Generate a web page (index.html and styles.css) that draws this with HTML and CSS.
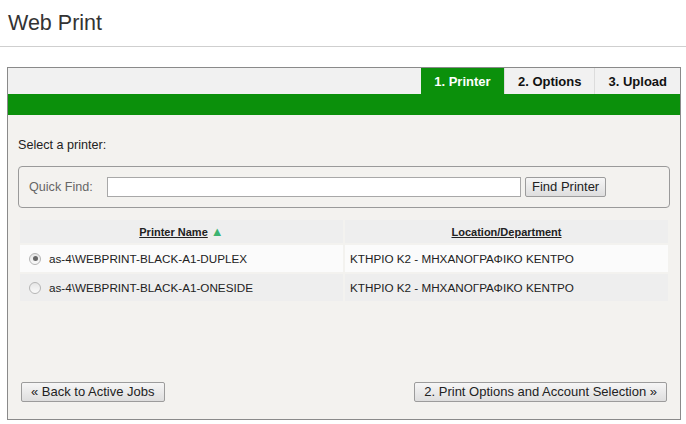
FILE: index.html
```html
<!DOCTYPE html>
<html>
<head>
<meta charset="utf-8">
<title>Web Print</title>
<link rel="stylesheet" href="styles.css">
</head>
<body>
<header class="page-head">
  <h1 class="page-title">Web Print</h1>
</header>
<div class="panel">
  <div class="tabbar">
    <div class="tab tab-active">1. Printer</div>
    <div class="tab">2. Options</div>
    <div class="tab">3. Upload</div>
  </div>
  <div class="greenbar"></div>
  <div class="content">
    <p class="intro">Select a printer:</p>
    <div class="finder">
      <span class="finder-label">Quick Find:</span>
      <input class="finder-input" type="text">
      <button class="btn" type="button">Find Printer</button>
    </div>
    <table class="printers">
      <thead>
        <tr>
          <th><span class="th-link">Printer Name</span> <span class="sort">&#9650;</span></th>
          <th><span class="th-link">Location/Department</span></th>
        </tr>
      </thead>
      <tbody>
        <tr class="row-odd">
          <td><label class="pick"><span class="radio radio-checked"></span>as-4\WEBPRINT-BLACK-A1-DUPLEX</label></td>
          <td class="loc">ΚΤΗΡΙΟ Κ2 - ΜΗΧΑΝΟΓΡΑΦΙΚΟ ΚΕΝΤΡΟ</td>
        </tr>
        <tr class="row-even">
          <td><label class="pick"><span class="radio"></span>as-4\WEBPRINT-BLACK-A1-ONESIDE</label></td>
          <td class="loc">ΚΤΗΡΙΟ Κ2 - ΜΗΧΑΝΟΓΡΑΦΙΚΟ ΚΕΝΤΡΟ</td>
        </tr>
      </tbody>
    </table>
    <div class="actions">
      <button class="btn btn-wide" type="button">« Back to Active Jobs</button>
      <button class="btn btn-wide" type="button">2. Print Options and Account Selection »</button>
    </div>
  </div>
</div>
</body>
</html>
```

FILE: styles.css
```css
html, body {
  margin: 0;
  padding: 0;
  background: #fff;
  font-family: "Liberation Sans", Arial, sans-serif;
  color: #222;
}
.page-head {
  height: 47px;
  border-bottom: 1px solid #cfcfcf;
  box-sizing: border-box;
}
.page-title {
  margin: 0;
  padding: 10px 0 0 8px;
  font-size: 21.5px;
  font-weight: normal;
  color: #333;
  line-height: 26px;
}
.panel {
  margin: 20px 0 0 7px;
  width: 674px;
  box-sizing: border-box;
  border: 1px solid #8a8a8a;
  background: #f3f2ef;
}
.tabbar {
  display: flex;
  justify-content: flex-end;
  height: 26px;
  background: #f1f1f1;
}
.tab {
  display: flex;
  align-items: center;
  padding: 0 13px;
  font-size: 13px;
  font-weight: bold;
  color: #111;
  border-left: 1px solid #dcdcdc;
}
.tab-active {
  background: #0b900b;
  color: #fff;
  border-left: none;
  width: 83px;
  box-sizing: border-box;
  justify-content: center;
}
.greenbar {
  height: 21px;
  background: #0b900b;
}
.content {
  height: 304px;
  box-sizing: border-box;
  padding: 22px 10px 17px;
  display: flex;
  flex-direction: column;
}
.intro {
  margin: 0;
  font-size: 12.6px;
  line-height: 16px;
  color: #222;
}
.finder {
  margin-top: 13px;
  height: 42px;
  box-sizing: border-box;
  border: 1px solid #9a9a9a;
  border-radius: 4px;
  display: flex;
  align-items: center;
  padding: 0 10px;
}
.finder-label {
  font-size: 12.6px;
  color: #666;
  width: 78px;
}
.finder-input {
  width: 414px;
  height: 20px;
  box-sizing: border-box;
  border: 1px solid #a8a8a8;
  background: #fff;
  margin: 0 4px 0 0;
  padding: 0 3px;
  font: 12px "Liberation Sans", Arial, sans-serif;
}
.btn {
  height: 20px;
  box-sizing: border-box;
  border: 1px solid #9c9c9c;
  border-radius: 2px;
  background: linear-gradient(#f6f6f6, #dedede);
  font: 13px "Liberation Sans", Arial, sans-serif;
  color: #222;
  padding: 0 6px;
  line-height: 18px;
}
.btn-wide {
  padding: 0 9px;
}
.printers {
  margin-top: 10px;
  width: 652px;
  border-spacing: 2px;
  font-size: 11.7px;
  table-layout: fixed;
}
.printers th {
  height: 23px;
  background: #eeeeee;
  font-weight: bold;
  font-size: 11px;
  padding: 0;
  text-align: center;
}
.th-link {
  text-decoration: underline;
  color: #222;
}
.sort {
  color: #3cb371;
  font-size: 13px;
}
.printers td {
  height: 27px;
  padding: 0;
}
.row-odd td { background: #fbfbfb; }
.row-even td { background: #eeeeee; }
.loc {
  padding-left: 5px !important;
}
.pick {
  display: flex;
  align-items: center;
  padding-left: 9px;
}
.radio {
  width: 12px;
  height: 12px;
  border-radius: 50%;
  border: 1px solid #b5b5b5;
  background: linear-gradient(#e6e6e6, #fafafa);
  margin-right: 8px;
  box-sizing: border-box;
  position: relative;
}
.radio-checked::after {
  content: "";
  position: absolute;
  left: 2.5px;
  top: 2.5px;
  width: 5px;
  height: 5px;
  border-radius: 50%;
  background: #666;
}
.actions {
  margin-top: auto;
  display: flex;
  justify-content: space-between;
  padding: 0 3px;
}
```
